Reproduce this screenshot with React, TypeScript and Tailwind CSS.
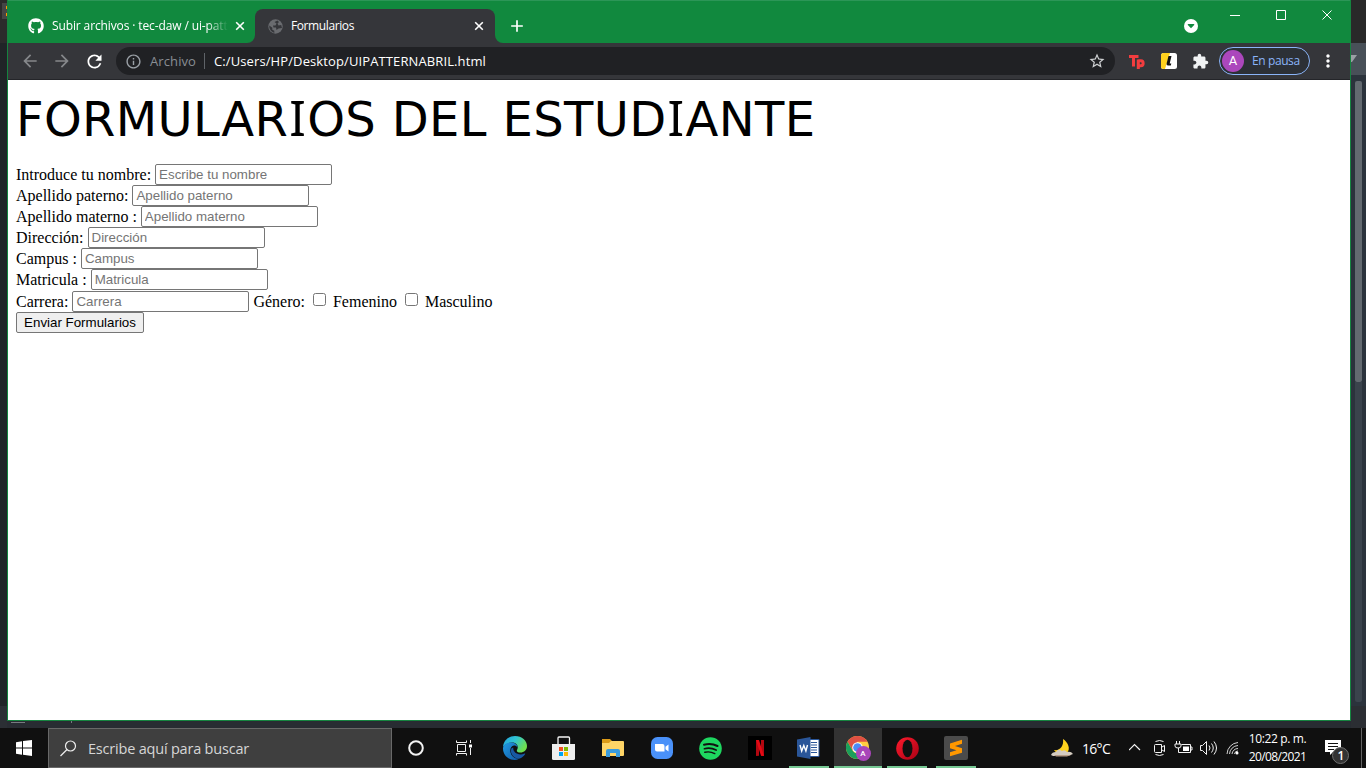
import React from 'react';
import { FaGithub } from 'react-icons/fa';
import { MdArrowBack, MdArrowForward, MdRefresh, MdInfoOutline, MdStarBorder, MdExtension, MdMoreVert, MdAdd } from 'react-icons/md';

const ui = "font-['Open_Sans','Noto_Sans',sans-serif]";

function Flare({ flip }: { flip?: boolean }) {
  return (
    <svg width="8" height="8" viewBox="0 0 8 8" className={flip ? 'shrink-0 self-end -scale-x-100' : 'shrink-0 self-end'}>
      <path d="M8 0v8H0a8 8 0 0 0 8-8Z" fill="#35363a" />
    </svg>
  );
}

function TabClose() {
  return (
    <svg width="14" height="14" viewBox="0 0 14 14" className="shrink-0" stroke="#fff" strokeWidth="1.6">
      <path d="m3.200 3.200 7.600 7.600m0-7.600-7.600 7.600" />
    </svg>
  );
}

function TabStrip() {
  return (
    <div className="flex h-[43px] border-t border-[#2c9657] bg-[#11893e] text-white">
      <div className="flex w-[239px] items-center pt-[8px] pl-[20px]">
        <FaGithub size={16} className="shrink-0" />
        <div className="ml-2 mr-[5px] w-[176px] text-[12px] leading-4 tracking-[-0.12px] whitespace-nowrap [mask-image:linear-gradient(to_right,black_88%,transparent)]">
          Subir archivos · tec-daw / ui-patt
        </div>
        <TabClose />
      </div>
      <Flare />
      <div className="mt-2 flex w-[240px] shrink-0 items-center rounded-t-[8px] bg-[#35363a] pl-[13px]">
        <svg width="15" height="15" viewBox="0 0 15 15" className="shrink-0">
          <circle cx="7.5" cy="7.5" r="7.2" fill="#696b6f" />
          <path d="M9.500 1.500 6.500 3l2 1.500-1 2H5l.5 2H8l.5 2.500 2-1.500 3.500-.5-.8-3-2.700.5-1-2 1.500-1.500Z" fill="#35363a" />
          <path d="m1.300 6.500 3 2.200v2l2 1v2.200L3 12 1.400 9Z" fill="#35363a" />
        </svg>
        <span className="ml-[8px] w-[181px] text-[12px] leading-4 tracking-[-0.4px]">Formularios</span>
        <TabClose />
      </div>
      <Flare flip />
      <MdAdd size={20} className="mt-[15px] ml-[4px] shrink-0" />
      <div className="flex-1" />
      <svg width="14" height="14" className="mt-[18px] shrink-0" viewBox="0 0 14 14">
        <circle cx="7" cy="7" r="7" fill="#fff" />
        <path d="M3.8 5h6.4v1L7 9.3 3.8 6Z" fill="#11893e" />
      </svg>
      <svg width="103" height="14" className="mt-2 mr-[17px] ml-[32px] shrink-0" viewBox="0 0 103 14" fill="none" stroke="#fff">
        <path d="M0 6.5h10M46.5 1.5h9v9h-9zM92.5 1.5l9 9m0-9-9 9" />
      </svg>
    </div>
  );
}

function Toolbar() {
  return (
    <div className="flex h-[37px] items-center border-b border-[#242529] bg-[#35363a]">
      <MdArrowBack size={20} className="ml-[12px] shrink-0 text-[#86888b]" />
      <MdArrowForward size={20} className="ml-[12px] shrink-0 text-[#86888b]" />
      <MdRefresh size={21} className="ml-[12px] -mr-px shrink-0 text-white" />
      <div className="ml-[12px] flex h-7 w-[999px] shrink-0 items-center rounded-full bg-[#202124] pr-2 pl-[9px]">
        <MdInfoOutline size={17} className="shrink-0 text-[#9aa0a6]" />
        <span className="ml-[8px] w-[54px] shrink-0 text-[13px] leading-4 tracking-[0.1px] text-[#898e94]">Archivo</span>
        <span className="h-4 w-px shrink-0 bg-[#5f6368]" />
        <span className="ml-[9px] flex-1 text-[13px] leading-4 tracking-[0.11px] whitespace-nowrap text-white">C:/Users/HP/Desktop/UIPATTERNABRIL.html</span>
        <MdStarBorder size={18} className="mr-[1px] shrink-0 text-[#cfd1d3]" />
      </div>
      <svg width="16" height="15" viewBox="0 0 16 15" className="ml-[14px] shrink-0" fill="none" stroke="#f23d3f" strokeWidth="3">
        <path d="M0 2.400h9.500M4.500 2v10.500M9.300 15V5.500M9.300 6.700h2.600c3 0 3 5 0 5H9.300" />
      </svg>
      <svg width="16" height="16" viewBox="0 0 16 16" className="ml-[16px] shrink-0">
        <rect width="16" height="16" rx="2.5" fill="#fff" />
        <path d="M2.500 0h6.500L4 16H2.500a2.500 2.500 0 0 1-2.500-2.500v-11A2.500 2.500 0 0 1 2.500 0Z" fill="#ffd21e" />
        <path d="M7.500 3h3L8.700 10.500h1.600l-.5 2H7q-1.800 0-1.400-2Z" fill="#111" />
      </svg>
      <MdExtension size={17} className="ml-[15px] shrink-0 text-[#f1f3f4]" />
      <div className="ml-[10px] flex h-7 w-[91px] shrink-0 items-center rounded-full border border-[#8ab4f8] bg-[#2c3036] pl-[2px]">
        <span className="flex size-[22px] shrink-0 items-center justify-center rounded-full bg-[#ab47bc] font-[Roboto,sans-serif] text-[13px] text-white">A</span>
        <span className="ml-2 text-[12px] leading-4 tracking-[-0.4px] whitespace-nowrap text-[#8ab4f8]">En pausa</span>
      </div>
      <MdMoreVert size={20} className="ml-[8px] shrink-0 text-white" />
    </div>
  );
}

const fields = [
  ['Introduce tu nombre:', 'Escribe tu nombre'],
  ['Apellido paterno:', 'Apellido paterno'],
  ['Apellido materno :', 'Apellido materno'],
  ['Dirección:', 'Dirección'],
  ['Campus :', 'Campus'],
  ['Matricula :', 'Matricula'],
];

function Field({ label, hint }: { label: string; hint: string }) {
  return (
    <label className="flex h-[21px] items-center gap-1 whitespace-nowrap">
      <span className="leading-[18px]">{label}</span>
      <input
        placeholder={hint}
        className="h-[21px] w-[177px] rounded-[2px] border border-[#767676] bg-white px-[3px] font-['Liberation_Sans',sans-serif] text-[13.333px] leading-[15px] placeholder:text-[#757575]"
      />
    </label>
  );
}

function Check({ label }: { label: string }) {
  return (
    <label className="flex items-center">
      <input type="checkbox" className="mr-[7px] mb-[5px] size-[13px] appearance-none rounded-[2.5px] border border-[#767676] bg-white" />
      {label}
    </label>
  );
}

function SerifI() {
  return <span className="mx-px font-['Noto_Sans',sans-serif] text-[49px] leading-none">I</span>;
}

function Page() {
  return (
    <main className="flex-1 bg-white pt-[3px] pl-[8px] font-['Liberation_Serif',serif] text-[16px] text-black">
      <h1 className="h-[81px] pt-[6px] font-['DejaVu_Sans',sans-serif] text-[48px] leading-[60px] tracking-[0.36px] whitespace-nowrap">FORMULAR<SerifI />OS DEL ESTUD<SerifI />ANTE</h1>
      <form>
        {fields.map(([l, h]) => <Field key={l} label={l} hint={h} />)}
        <div className="mt-px flex h-[21px] items-center whitespace-nowrap">
          <Field label="Carrera:" hint="Carrera" />
          <span className="mr-[8px] ml-[4px]">Género:</span>
          <Check label="Femenino" />
          <span className="w-2" />
          <Check label="Masculino" />
        </div>
        <button type="button" className="block h-[21px] w-[128px] rounded-[2px] border border-[#767676] bg-[#efefef] font-['Liberation_Sans',sans-serif] text-[13.333px] leading-[17px] whitespace-nowrap">Enviar Formularios</button>
      </form>
    </main>
  );
}

function Slot({ children, w = 'w-[49px]', bar, active }: { children: React.ReactNode; w?: string; bar?: string; active?: boolean }) {
  return (
    <div className={`${w} flex h-10 shrink-0 flex-col items-center ${active ? 'bg-[#333333]' : ''}`}>
      <div className="flex h-[38px] items-center justify-center pt-[2px]">{children}</div>
      {bar && <div className={`h-[2px] ${bar} bg-[#76c893]`} />}
    </div>
  );
}

function Taskbar() {
  return (
    <footer className="flex h-10 bg-[#101010] text-white">
      <Slot w="w-12">
        <svg width="16" height="16" viewBox="0 0 16 16" fill="#fff"><path d="M0 2.200 6 1.300v6.200H0ZM7 1.100 16 0v7.500H7ZM0 8.500h6v6.200l-6-.9ZM7 8.500h9V16l-9-1.200Z" /></svg>
      </Slot>
      <div className="flex h-10 w-[344px] shrink-0 items-center border border-[#686868] bg-[#3f3f3f]">
        <svg width="17" height="17" viewBox="0 0 17 17" className="ml-[11px]" fill="none" stroke="#eee" strokeWidth="1.200"><circle cx="10.500" cy="6" r="5" /><path d="m7 9.500-6.500 6.500" /></svg>
        <span className="mt-[2px] ml-[11px] text-[14.500px] leading-5 tracking-[-0.2px] text-[#d6d6d6]">Escribe aquí para buscar</span>
      </div>
      <Slot w="w-[48px]"><svg width="16" height="16" viewBox="0 0 16 16"><circle cx="8" cy="8" r="6.800" fill="none" stroke="#f2f2f2" strokeWidth="2" /></svg></Slot>
      <Slot w="w-[48px]">
        <svg width="16" height="16" viewBox="0 0 16 16" fill="none" stroke="#f2f2f2" className="-mt-px"><path d="M.5.5v2h10v-2M1.500 4.500h8v7h-8ZM.5 15.500v-2h10v2M14.500 0v3M14.500 8v7" /><path d="M13 4.500h3v3h-3z" fill="#fff" stroke="none" /></svg>
      </Slot>
      <Slot w="w-[54px]">
        <svg width="24" height="24" viewBox="0 0 24 24">
          <defs>
            <linearGradient id="edge" x1="0" y1="0" x2="1" y2=".5"><stop stopColor="#229fe1" /><stop offset=".5" stopColor="#30c5d2" /><stop offset="1" stopColor="#6fdf4d" /></linearGradient>
            <linearGradient id="edgeb" x1="0" y1="0" x2="1" y2="1"><stop stopColor="#209ce4" /><stop offset="1" stopColor="#1258a4" /></linearGradient>
          </defs>
          <path d="M0 11C.5 4.500 5.500 0 12 0c7 0 12 4.800 12 10 0 4-3 6.500-6.600 6.500-3 0-4-1.200-3.400-2.500 2.300-4.200-1-7.500-5-7.500C4.500 6.500 1 8.700 0 11Z" fill="url(#edge)" />
          <path d="M0 12c.4-3.200 4-5.500 8-5.500 3.500 0 6.500 2 6.500 5-1-1.500-2-2-3.500-2C5 10 6 23 16 22.700c-1.300.8-2.700 1.200-4.300 1.200C4.500 23.800-.2 18.500 0 12Z" fill="url(#edgeb)" />
          <path d="M8.200 13c-1.300 4.500 2.300 9.700 7.800 9.700 3-.5 5-2.600 6.200-4.600.3-.6-.2-.8-.7-.5-5.500 2.700-12-1-11.200-6-.9.1-1.700.6-2.100 1.400Z" fill="#1858a2" />
        </svg>
      </Slot>
      <Slot w="w-[43px]">
        <svg width="23" height="24" viewBox="0 0 23 24"><path d="M6 8V2q0-1 1-1h9.500q1 0 1 1v6" fill="none" stroke="#f4f4f4" strokeWidth="1.300" /><path d="M0 8h23v14.500q0 1.500-1.500 1.500h-20Q0 24 0 22.500Z" fill="#eee" /><path d="M7 11h4v4H7Z" fill="#f25022" /><path d="M12 11h4v4h-4Z" fill="#7fba00" /><path d="M7 16h4v4H7Z" fill="#00a4ef" /><path d="M12 16h4v4h-4Z" fill="#ffb900" /></svg>
      </Slot>
      <Slot w="w-[55px]">
        <svg width="22" height="18" viewBox="0 0 22 18"><path d="M0 0h8l2 2v14H0Z" fill="#dc9b18" /><path d="M0 4h7l2-2h12q1 0 1 1v13q0 1-1 1H0Z" fill="#ffd566" /><path d="M4 18v-6q0-2 2-2h10q2 0 2 2v6h-4v-4H8v4Z" fill="#3a9bdc" /></svg>
      </Slot>
      <Slot w="w-[43px]">
        <svg width="24" height="24" viewBox="0 0 24 24"><rect x="1" y="1" width="22" height="22" rx="6.500" fill="#4a91f9" /><path d="M5 8h7.500q2 0 2 2v5.500H7q-2 0-2-2Zm10.500 2.700L18.500 8.500v7l-3-2.200Z" fill="#fff" /></svg>
      </Slot>
      <Slot w="w-[55px]">
        <svg width="23" height="23" viewBox="0 0 23 23" fill="none" strokeLinecap="round"><circle cx="11.500" cy="11.500" r="11.300" fill="#1ed760" /><path d="M5 7.700c4.500-1.300 9.500-.8 13.500 1.300" stroke="#111" strokeWidth="2" /><path d="M5.400 11.700c4-1.200 8-.6 11.700 1.300" stroke="#111" strokeWidth="1.700" /><path d="M5.800 15.300c3.500-.9 6.500-.6 10 1.300" stroke="#111" strokeWidth="1.400" /></svg>
      </Slot>
      <Slot w="w-[43px]">
        <svg width="24" height="24" viewBox="0 0 24 24"><path d="M0 0h24v24H0Z" fill="#000" /><path d="M8 4h3v15.800L8 20ZM13 4h3v16l-3-.2Z" fill="#b20710" /><path d="M8 4h3l5 16-3-.2Z" fill="#e50914" /></svg>
      </Slot>
      <Slot w="w-[55px]" bar="w-10">
        <svg width="23" height="22" viewBox="0 0 23 22"><path d="M12 2.500h10v17H12Z" fill="#fff" stroke="#2a5699" /><path d="M14 5.500h6M14 8h6M14 10.500h6M14 13h6M14 15.500h6" stroke="#2a5699" /><path d="M0 2.500 13.500 0v22L0 19.500Z" fill="#2a5699" /><path d="m3 8 1.700 6L6.800 8.500 8.900 14l1.600-6" stroke="#fff" strokeWidth="1.400" fill="none" /></svg>
      </Slot>
      <Slot w="ml-[-2px] w-12" bar="w-12" active>
        <div className="relative mt-px size-[25px]">
          <svg width="23" height="23" viewBox="0 0 24 24"><circle cx="12" cy="12" r="12" fill="#ffcd40" /><path d="M1.600 6A12 12 0 0 1 22.400 6H12L7 15Z" fill="#df5043" /><path d="M1.600 6 6.800 15c2 3.500 5.500 3.300 8.200 2.500L12 24A12 12 0 0 1 1.600 6Z" fill="#1a9f5b" /><circle cx="12" cy="12" r="5.500" fill="#fff" /><circle cx="12" cy="12" r="4.500" fill="#4c8bf5" /></svg>
          <span className="absolute top-[10px] left-[10px] flex size-[15px] items-center justify-center rounded-full bg-[#a845b9] font-[Roboto,sans-serif] text-[8px] font-medium text-white">A</span>
        </div>
      </Slot>
      <Slot w="ml-[5px] w-10" bar="w-10">
        <svg width="23" height="23" viewBox="0 0 23 23"><defs><linearGradient id="op" x1="0" y1="0" x2="1" y2="1"><stop stopColor="#ff1b2d" /><stop offset="1" stopColor="#a70014" /></linearGradient></defs><circle cx="11.500" cy="11.500" r="11.300" fill="url(#op)" /><ellipse cx="11.500" cy="11.500" rx="5" ry="8.800" fill="#101010" /></svg>
      </Slot>
      <Slot w="ml-[9px] w-10" bar="w-10">
        <svg width="24" height="24" viewBox="0 0 24 24"><rect width="24" height="24" rx="2" fill="#4b4b4b" /><path d="M6 7.500 18 3.700v4L11 10l7 2.200v4.600L6 20.300v-4l6.500-2L6 12.200Z" fill="#ff9800" /></svg>
      </Slot>
      <div className="flex-1" />
      <svg width="22" height="20" viewBox="0 0 22 20" className="mt-[10px] shrink-0"><path d="M12 1c5 3 8 10 4 14-3 3-10 2-13-3 6 1 10-4 9-11Z" fill="#ffd21e" /><path d="M0 17q1-3 5-3 2-4 6-1 3-2 5 1 4-1 6 2l-5 2H2Z" fill="#d5ccc1" /><path d="M3 17h17l-4 1.500H5Z" fill="#b49a85" /></svg>
      <span className="mt-[11px] ml-[9px] w-[47px] text-[14px] leading-5 tracking-[-0.7px]">16°C</span>
      <svg width="91" height="18" viewBox="0 0 91 18" className="mt-[11px] shrink-0" fill="none" stroke="#f3f3f3">
        <path d="m0 11 5.500-5.500L11 11" strokeWidth="1.200" />
        <path d="M26.500 5.500h6v8h-6q-1 0-1-1v-6q0-1 1-1ZM33 8l2.500-1.500v6L33 11M26.500 2.500q4-2 8 0M26.500 15.500q4 2 8 0" />
        <path d="M52.500 5.500h9v8H49.500v-3M62 8h1v3h-1M47.500 2v3m3-3v3M46 5h6v2q0 2-3 2T46 7ZM49.500 9v2" /><path d="M54 7.500h6v4.500h-6Z" fill="#fff" stroke="none" />
        <path d="M71.500 6.500h2l4-4v13l-4-4h-2ZM80 6.500q2 2.500 0 5M82.500 4.500q3.500 4.500 0 9M85 2.500q5 6.500 0 13" />
      </svg>
      <svg width="13" height="18" viewBox="0 0 13 18" className="mt-[11px] mr-[8px] ml-[6px] shrink-0" fill="none" stroke="#d0d0d0"><path d="M1 15A12 12 0 0 1 12 3.500M3.500 15A9 9 0 0 1 12 6.500M6 15a6 6 0 0 1 6-5.500M8.500 15a3.500 3.500 0 0 1 3.500-3" /><circle cx="11" cy="14" r="1.500" fill="#fff" stroke="none" /></svg>
      <div className="mt-[2px] flex w-[61px] shrink-0 flex-col items-center text-[12px] leading-[18px] whitespace-nowrap">
        <span className="tracking-[-0.35px]">10:22 p. m.</span>
        <span className="tracking-[-0.6px]">20/08/2021</span>
      </div>
      <svg width="26" height="28" viewBox="0 0 26 28" className="mt-[11px] mr-[11px] ml-[16px] shrink-0">
        <path d="M1 1h16v12H9l-3 3v-3H1Z" fill="#fff" /><path d="M4 4.500h10M4 7.500h10M4 10.500h6" stroke="#111" />
        <circle cx="16.500" cy="16.500" r="8" fill="#333" stroke="#707070" />
        <text x="13.500" y="21" fill="#fff" fontSize="12" fontWeight="600">1</text>
      </svg>
      <div className="w-[5px] shrink-0 border-l border-[#626262]" />
    </footer>
  );
}

export default function App() {
  return (
    <div className={`${ui} flex h-[768px] w-[1366px] flex-col overflow-hidden bg-[#101010]`}>
      <div className="flex h-[728px]">
        <div className="flex w-[7px] flex-col bg-[#202427]">
          <div className="h-[43px] bg-[#2b2b2b] pt-[3px] pl-[2px]"><div className="flex h-4 flex-col items-end justify-center gap-1 bg-[#454545]"><i className="h-[3px] w-px bg-[#ff9800]" /><i className="h-[3px] w-px bg-[#ff9800]" /></div></div>
          <div className="mt-auto h-[22px] bg-[#2b2f34]" />
        </div>
        <div className="flex w-[1344px] flex-col">
          <div className="flex h-[721px] flex-col border-x border-b border-[#15843f]">
            <TabStrip />
            <Toolbar />
            <Page />
          </div>
          <div className="flex h-[7px] bg-[#282c32]">
            <i className="mt-px ml-[4px] h-px w-[14px] bg-[#777b80]" />
            <i className="ml-[46px] h-[2px] w-px bg-[#777b80]" />
          </div>
        </div>
        <div className="flex w-[15px] flex-col bg-[#2b333c]">
          <div className="h-[43px] bg-[#292929]" />
          <div className="h-[32px] bg-[#485058] pt-3"><svg width="6" height="7" viewBox="0 0 6 7"><path d="M0 0h6L1 7H0Z" fill="#9ba0a5" /></svg></div>
          <div className="mt-[6px] ml-[4px] h-[301px] w-[7px] rounded-[2px] bg-[#636a70]" />
          <div className="ml-[4px] h-[320px] w-[7px] rounded-b-[2px] bg-[#3a434c]" />
          <div className="mt-auto h-[22px] bg-[#2b2e33]" />
        </div>
      </div>
      <Taskbar />
    </div>
  );
}
